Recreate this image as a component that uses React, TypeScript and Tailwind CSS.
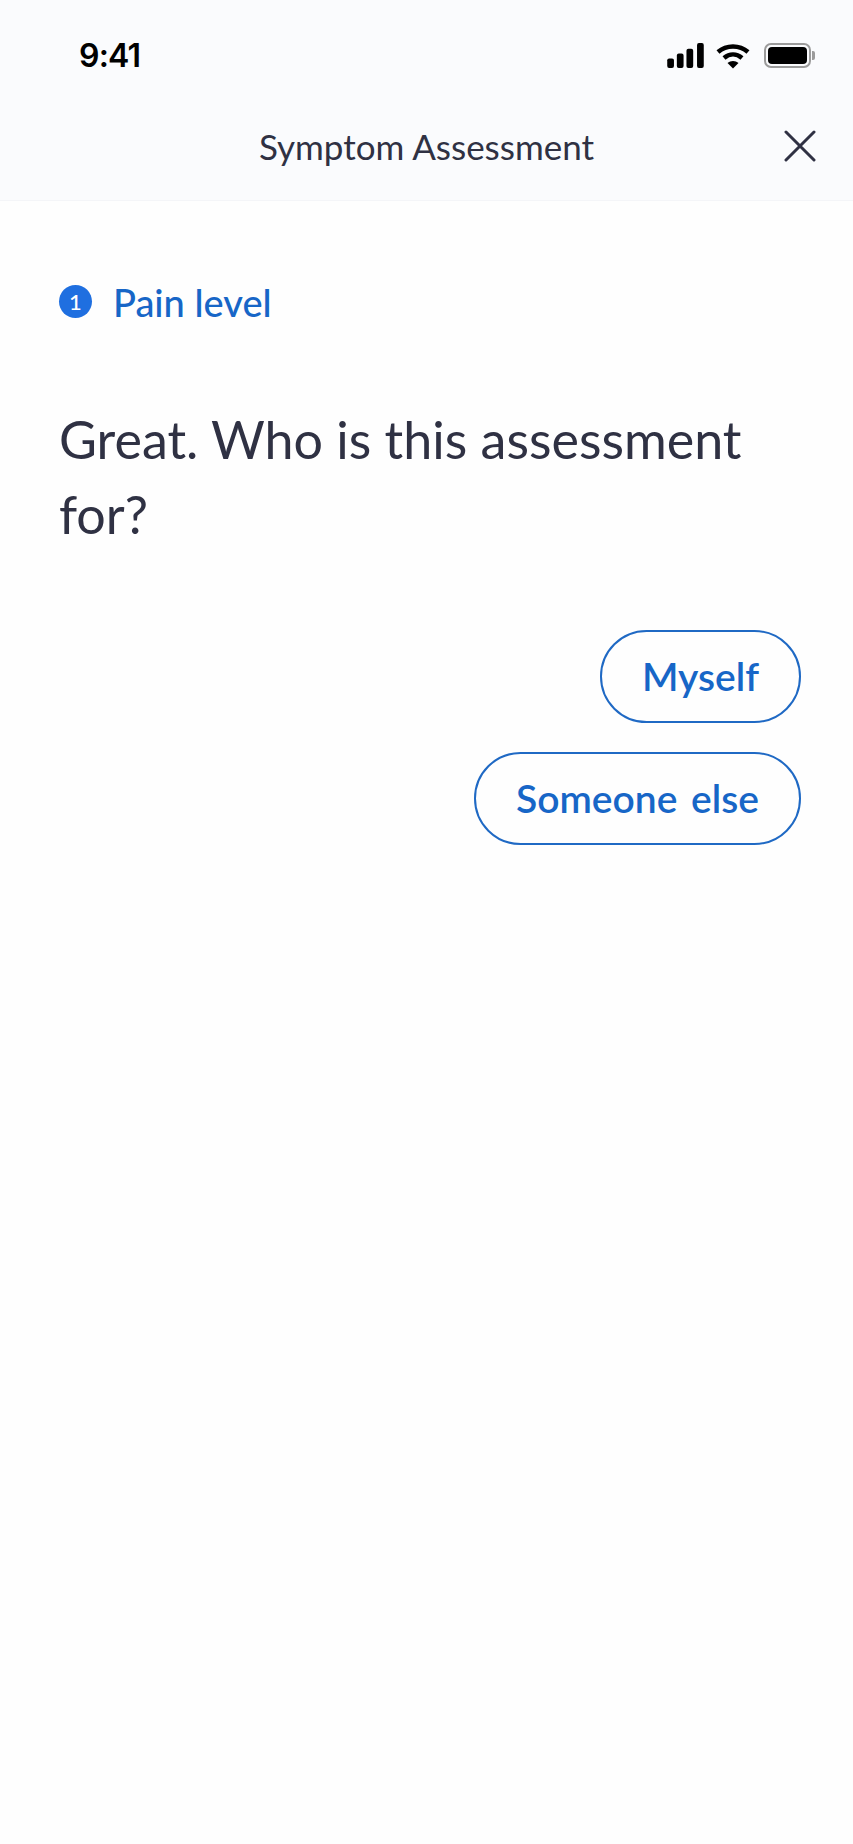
import React from "react";

function StatusIcons() {
  return (
    <div className="flex items-center gap-[12px]">
      <svg width="37" height="25" viewBox="0 0 38 26" fill="#000">
        <rect x="0" y="16" width="7" height="10" rx="2" />
        <rect x="10" y="11" width="7" height="15" rx="2" />
        <rect x="20" y="6" width="7" height="20" rx="2" />
        <rect x="31" y="0" width="7" height="26" rx="2" />
      </svg>
      <svg width="34" height="26" viewBox="0 0 34 25" fill="none" stroke="#000" strokeWidth="4.5">
        <path d="M2 8.5C10.5 1 23.500 1 32 8.5" />
        <path d="M8 14.500C13.500 9.800 20.500 9.800 26 14.500" />
        <path d="M17 25L11.500 19.500C14.500 16.800 19.500 16.800 22.500 19.500Z" fill="#000" stroke="none" />
      </svg>
      <div className="flex items-center ml-[2px]">
        <div className="w-[47px] h-[25px] rounded-[7px] border-2 border-[#9b9b9b] p-[2px]">
          <div className="w-full h-full rounded-[4px] bg-black" />
        </div>
        <div className="w-[3px] h-[9px] rounded-r-[2px] bg-[#9b9b9b] ml-[1px]" />
      </div>
    </div>
  );
}

export default function App() {
  return (
    <div className="w-[853px] h-[1844px] bg-[#fefefe] overflow-hidden font-['Lato','Noto_Sans',sans-serif]">
      <div className="h-[201px] bg-[#fafbfd] border-b border-[#f4f5f8] flex flex-col">
        <div className="flex items-center justify-between pl-[79px] pr-[38px] pt-[40px] h-[71px]">
          <span className="text-[32px] leading-[32px] font-semibold text-black font-['Inter',sans-serif] tracking-[-0.8px]">9:41</span>
          <StatusIcons />
        </div>
        <div className="relative flex items-center justify-center mt-[43px] h-[64px]">
          <span className="text-[35px] text-[#2f3143]">Symptom Assessment</span>
          <svg className="absolute right-[37px] top-[16px]" width="32" height="32" viewBox="0 0 32 32" fill="none" stroke="#2f3143" strokeWidth="3" strokeLinecap="round">
            <path d="M2 2L30 30M30 2L2 30" />
          </svg>
        </div>
      </div>

      <div className="pl-[59px] pr-[52px] pt-[84px]">
        <div className="flex items-center gap-[21px] h-[33px]">
          <div className="w-[33px] h-[33px] rounded-full bg-[#1f6fe0] flex items-center justify-center text-white text-[22px] font-medium leading-none">1</div>
          <span className="text-[38px] leading-[40px] text-[#1766c7] font-medium">Pain level</span>
        </div>

        <h1 className="mt-[84px] text-[52px] leading-[75px] font-normal text-[#2f3143]">
          Great. Who is this assessment<br />for?
        </h1>

        <div className="mt-[78px] flex flex-col items-end gap-[29px]">
          <button className="h-[93px] px-[40px] rounded-full border-2 border-[#1f69c4] text-[39px] font-semibold text-[#1766c7]">Myself</button>
          <button className="h-[93px] px-[40px] rounded-full border-2 border-[#1f69c4] text-[39px] font-semibold [word-spacing:4px] text-[#1766c7]">Someone else</button>
        </div>
      </div>
    </div>
  );
}
